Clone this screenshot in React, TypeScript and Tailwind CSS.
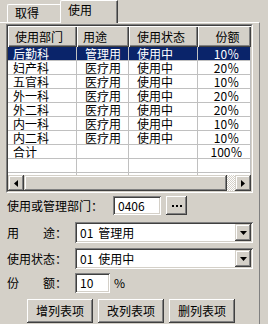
import React from "react";

const raised =
  "shadow-[inset_-1px_-1px_#404040,inset_1px_1px_#d4d0c8,inset_-2px_-2px_#808080,inset_2px_2px_#ffffff]";
const buttonRaised =
  "shadow-[inset_-1px_-1px_#404040,inset_1px_1px_#ffffff,inset_-2px_-2px_#808080,inset_2px_2px_#d4d0c8]";
const sunken =
  "shadow-[inset_1px_1px_#808080,inset_-1px_-1px_#ffffff,inset_2px_2px_#404040,inset_-2px_-2px_#d4d0c8]";

const colW = ["w-[69px]", "w-[52px]", "w-[69px]", "w-[53px]"];
const headPad = ["pl-[7px]", "pl-[6px]", "pl-[8px]", "pl-[6px] justify-center"];
const cellPad = ["pl-[5px]", "pl-[8px]", "pl-[8px]", "pl-[5px] justify-center"];

const headers = ["使用部门", "用途", "使用状态", "份额"];

const rows = [
  ["后勤科", "管理用", "使用中", "10％"],
  ["妇产科", "医疗用", "使用中", "20％"],
  ["五官科", "医疗用", "使用中", "10％"],
  ["外一科", "医疗用", "使用中", "20％"],
  ["外二科", "医疗用", "使用中", "20％"],
  ["内一科", "医疗用", "使用中", "10％"],
  ["内二科", "医疗用", "使用中", "10％"],
  ["合计", "", "", "100％"],
  ["", "", "", ""],
  ["", "", "", ""],
];

function DownArrow() {
  return (
    <svg width="7" height="4" viewBox="0 0 7 4">
      <path d="M0 0h7L3.5 4z" fill="#000" />
    </svg>
  );
}

function Combo({ code, text }: { code: string; text: string }) {
  return (
    <div className={`flex h-[21px] w-[178px] bg-white p-[2px] ${sunken}`}>
      <div className="flex flex-1 items-center pl-[3px]">
        <span>{code}</span>
        <span className="pl-[5px]">{text}</span>
      </div>
      <div className={`flex w-[16px] items-center justify-center bg-[#d4d0c8] ${raised}`}>
        <DownArrow />
      </div>
    </div>
  );
}

export default function App() {
  return (
    <div className="h-[324px] w-[268px] overflow-hidden bg-[#d4d0c8] text-[12px] leading-none text-black [font-family:'Noto_Sans_CJK_SC','Noto_Sans',sans-serif]">
      {/* Tabs */}
      <div className="flex h-[22px] items-end pl-[7px]">
        <div className="h-[18px] w-[55px] rounded-tl-[2px] border-l border-t border-white pl-[7px] pt-[2px] shadow-[inset_-1px_0_#808080]">
          取得
        </div>
        <div className="relative z-10 -mb-px -ml-[2px] h-[23px] w-[58px] rounded-tl-[2px] border-l border-r border-t border-white border-r-[#404040] bg-[#d4d0c8] pl-[7px] pt-[3px] shadow-[inset_-1px_0_#808080]">
          使用
        </div>
      </div>

      {/* Panel */}
      <div className="h-[302px] w-[260px] border-r border-t border-white border-r-[#808080] pl-[6px] pt-[1px]">
        {/* Grid */}
        <div className="h-[169px] w-[247px] border border-[#808080] border-b-white border-r-white">
          <div className="flex h-full w-full flex-col border border-[#404040] border-b-[#d4d0c8] border-r-[#d4d0c8]">
            <div className="flex h-[21px] shrink-0">
              {headers.map((h, i) => (
                <div
                  key={h}
                  className={`flex items-center ${colW[i]} ${headPad[i]} shadow-[inset_1px_1px_#ffffff,inset_-1px_-1px_#404040,inset_-2px_-2px_#808080]`}
                >
                  {h}
                </div>
              ))}
            </div>
            <div className="flex-1 overflow-hidden bg-white">
              {rows.map((r, ri) => (
                <div
                  key={ri}
                  className={`flex h-[14px] ${ri === 0 ? "bg-[#0a246a] text-white" : ""}`}
                >
                  {r.map((c, ci) => (
                    <div
                      key={ci}
                      className={`flex items-center border-b border-r border-[#c0c0c0] ${colW[ci]} ${cellPad[ci]}`}
                    >
                      {c}
                    </div>
                  ))}
                </div>
              ))}
            </div>
            {/* Horizontal scrollbar */}
            <div className="flex h-[16px] shrink-0">
              <div className={`flex w-[16px] items-center justify-center bg-[#d4d0c8] ${raised}`}>
                <svg width="4" height="7" viewBox="0 0 4 7">
                  <path d="M4 0v7L0 3.5z" fill="#000" />
                </svg>
              </div>
              <div className={`w-[203px] bg-[#d4d0c8] ${raised}`} />
              <div className="w-[8px] bg-[repeating-conic-gradient(#ffffff_0_25%,#d4d0c8_0_50%)] bg-[length:2px_2px]" />
              <div className={`flex w-[16px] items-center justify-center bg-[#d4d0c8] ${raised}`}>
                <svg width="4" height="7" viewBox="0 0 4 7">
                  <path d="M0 0v7L4 3.5z" fill="#000" />
                </svg>
              </div>
            </div>
          </div>
        </div>

        {/* Form */}
        <div className="flex flex-col pl-[1px]">
          <div className="mt-[3px] flex h-[19px] items-center">
            <span className="w-[106px]">使用或管理部门：</span>
            <div className={`flex h-[19px] w-[48px] items-center bg-white pl-[5px] ${sunken}`}>0406</div>
            <div className={`ml-[5px] flex h-[19px] w-[21px] items-center justify-center gap-[2px] bg-[#d4d0c8] ${buttonRaised}`}>
              <span className="h-[2px] w-[2px] bg-black" />
              <span className="h-[2px] w-[2px] bg-black" />
              <span className="h-[2px] w-[2px] bg-black" />
            </div>
          </div>

          <div className="mt-[7px] flex h-[21px] items-center">
            <span className="w-[68px] whitespace-pre">用　　途：</span>
            <Combo code="01" text="管理用" />
          </div>

          <div className="mt-[5px] flex h-[21px] items-center">
            <span className="w-[68px]">使用状态：</span>
            <Combo code="01" text="使用中" />
          </div>

          <div className="mt-[4px] flex h-[20px] items-center">
            <span className="w-[68px] whitespace-pre">份　　额：</span>
            <div className={`flex h-[20px] w-[35px] items-center bg-white pl-[5px] ${sunken}`}>10</div>
            <span className="pl-[4px]">%</span>
          </div>

          <div className="mt-[6px] flex gap-[5px] pl-[20px]">
            {["增列表项", "改列表项", "删列表项"].map((b) => (
              <div
                key={b}
                className={`flex h-[24px] w-[66px] items-center justify-center ${buttonRaised}`}
              >
                {b}
              </div>
            ))}
          </div>
        </div>
      </div>
    </div>
  );
}
